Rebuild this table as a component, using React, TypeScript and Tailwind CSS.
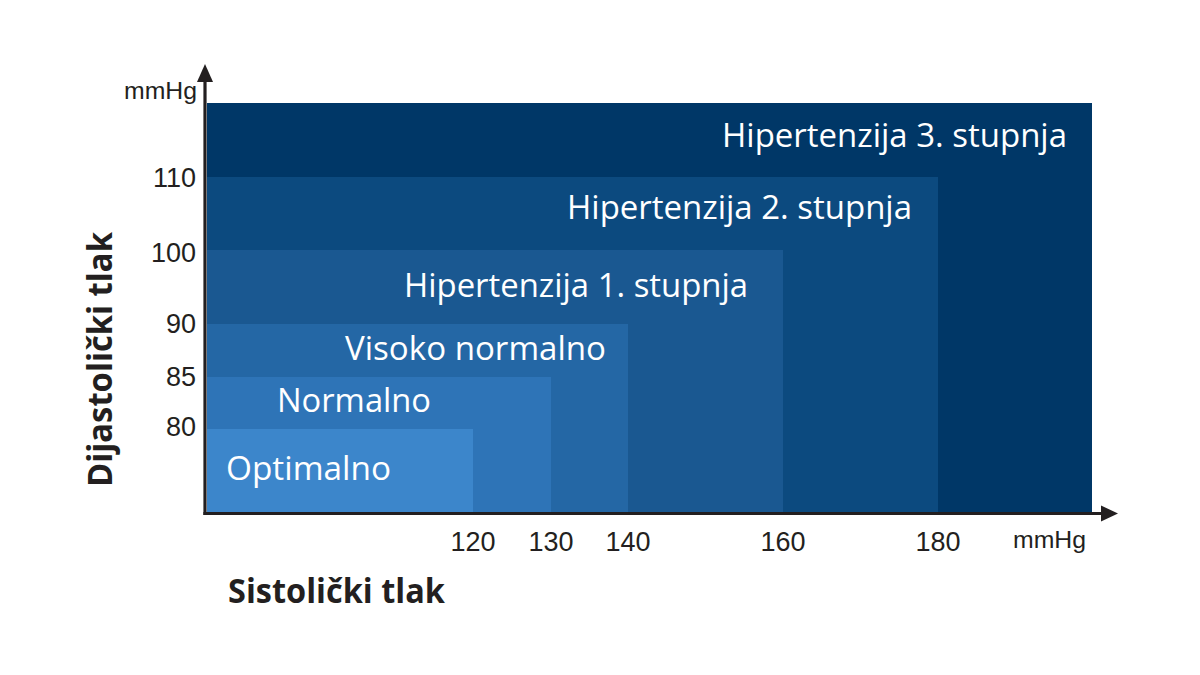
import React from "react";

const rects = [
  { x2: 1092, top: 103, fill: "#003767" },
  { x2: 938, top: 177, fill: "#0c4a7f" },
  { x2: 783, top: 250, fill: "#1a5891" },
  { x2: 628, top: 324, fill: "#2467a5" },
  { x2: 551, top: 377, fill: "#2e74b7" },
  { x2: 473, top: 429, fill: "#3c86cb" },
];

const boxLabels = [
  { text: "Hipertenzija 3. stupnja", x: 722, w: 345, y: 147 },
  { text: "Hipertenzija 2. stupnja", x: 567, w: 345, y: 219 },
  { text: "Hipertenzija 1. stupnja", x: 404, w: 344, y: 297 },
  { text: "Visoko normalno", x: 345, w: 261, y: 360 },
  { text: "Normalno", x: 277, w: 154, y: 412 },
  { text: "Optimalno", x: 226, w: 165, y: 480 },
];

const yLabels = [
  { t: "110", y: 187 },
  { t: "100", y: 262 },
  { t: "90", y: 333 },
  { t: "85", y: 386 },
  { t: "80", y: 436 },
];

const xLabels = [
  { t: "120", x: 473 },
  { t: "130", x: 551 },
  { t: "140", x: 628 },
  { t: "160", x: 783 },
  { t: "180", x: 938 },
];

const humanist = "'Open Sans', 'Noto Sans', sans-serif";
const arial = "'Liberation Sans', Arial, sans-serif";

export default function App() {
  return (
    <div className="w-[1200px] h-[675px] bg-white overflow-hidden">
      <svg width="1200" height="675" viewBox="0 0 1200 675" className="block">
        {rects.map((r, i) => (
          <rect key={i} x={207} y={r.top} width={r.x2 - 207} height={512 - r.top} fill={r.fill} />
        ))}
        {boxLabels.map((l, i) => (
          <text
            key={i}
            x={l.x}
            y={l.y}
            fill="#ffffff"
            fontFamily={humanist}
            fontSize={33}
            textLength={l.w}
            lengthAdjust="spacingAndGlyphs"
          >
            {l.text}
          </text>
        ))}
        {/* axes */}
        <line x1={205} y1={515} x2={205} y2={76} stroke="#231f20" strokeWidth={3.2} />
        <polygon points="205,64 213,82 197,82" fill="#231f20" />
        <line x1={203.4} y1={513.5} x2={1106} y2={513.5} stroke="#231f20" strokeWidth={3.2} />
        <polygon points="1118,513.5 1101,505.5 1101,521.5" fill="#231f20" />

        {/* y labels */}
        <text
          x={124}
          y={99}
          fill="#231f20"
          fontFamily={arial}
          fontSize={24}
          textLength={73}
          lengthAdjust="spacingAndGlyphs"
        >
          mmHg
        </text>
        {yLabels.map((l) => (
          <text key={l.t} x={196} y={l.y} textAnchor="end" fill="#231f20" fontFamily={arial} fontSize={27}>
            {l.t}
          </text>
        ))}
        {xLabels.map((l) => (
          <text key={l.t} x={l.x} y={551} textAnchor="middle" fill="#231f20" fontFamily={arial} fontSize={27}>
            {l.t}
          </text>
        ))}
        <text
          x={1013}
          y={548}
          fill="#231f20"
          fontFamily={arial}
          fontSize={24}
          textLength={73}
          lengthAdjust="spacingAndGlyphs"
        >
          mmHg
        </text>

        <text
          x={228}
          y={603}
          fill="#231f20"
          fontFamily={humanist}
          fontWeight={700}
          fontSize={34}
          textLength={217}
          lengthAdjust="spacingAndGlyphs"
        >
          Sistolički tlak
        </text>
        <text
          x={0}
          y={0}
          transform="translate(112 487) rotate(-90)"
          fill="#231f20"
          fontFamily={humanist}
          fontWeight={700}
          fontSize={34}
          textLength={255}
          lengthAdjust="spacingAndGlyphs"
        >
          Dijastolički tlak
        </text>
      </svg>
    </div>
  );
}
